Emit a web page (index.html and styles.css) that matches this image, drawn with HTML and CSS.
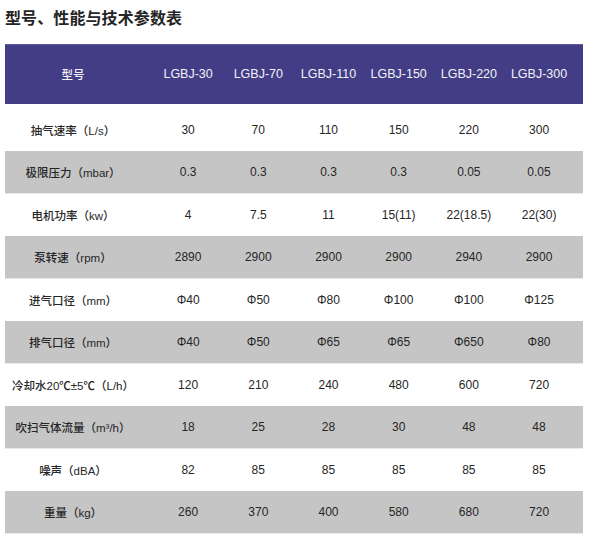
FILE: index.html
```html
<!DOCTYPE html>
<html lang="zh">
<head>
<meta charset="utf-8">
<title>型号、性能与技术参数表</title>
<link rel="stylesheet" href="styles.css">
</head>
<body>
<h1 class="title">型号、性能与技术参数表</h1>
<table class="spec">
  <colgroup>
    <col class="c-label">
    <col class="c-val"><col class="c-val"><col class="c-val">
    <col class="c-val"><col class="c-val"><col class="c-val">
    <col class="c-pad">
  </colgroup>
  <thead>
    <tr class="head">
      <th class="label">型号</th>
      <th>LGBJ-30</th><th>LGBJ-70</th><th>LGBJ-110</th><th>LGBJ-150</th><th>LGBJ-220</th><th>LGBJ-300</th><th></th>
    </tr>
  </thead>
  <tbody>
    <tr class="first"><td class="label">抽气速率（L/s）</td><td>30</td><td>70</td><td>110</td><td>150</td><td>220</td><td>300</td><td></td></tr>
    <tr class="alt"><td class="label">极限压力（mbar）</td><td>0.3</td><td>0.3</td><td>0.3</td><td>0.3</td><td>0.05</td><td>0.05</td><td></td></tr>
    <tr><td class="label">电机功率（kw）</td><td>4</td><td>7.5</td><td>11</td><td>15(11)</td><td>22(18.5)</td><td>22(30)</td><td></td></tr>
    <tr class="alt"><td class="label">泵转速（rpm）</td><td>2890</td><td>2900</td><td>2900</td><td>2900</td><td>2940</td><td>2900</td><td></td></tr>
    <tr><td class="label">进气口径（mm）</td><td>Φ40</td><td>Φ50</td><td>Φ80</td><td>Φ100</td><td>Φ100</td><td>Φ125</td><td></td></tr>
    <tr class="alt"><td class="label">排气口径（mm）</td><td>Φ40</td><td>Φ50</td><td>Φ65</td><td>Φ65</td><td>Φ650</td><td>Φ80</td><td></td></tr>
    <tr><td class="label">冷却水20℃±5℃（L/h）</td><td>120</td><td>210</td><td>240</td><td>480</td><td>600</td><td>720</td><td></td></tr>
    <tr class="alt"><td class="label">吹扫气体流量（m³/h）</td><td>18</td><td>25</td><td>28</td><td>30</td><td>48</td><td>48</td><td></td></tr>
    <tr><td class="label">噪声（dBA）</td><td>82</td><td>85</td><td>85</td><td>85</td><td>85</td><td>85</td><td></td></tr>
    <tr class="alt"><td class="label">重量（kg）</td><td>260</td><td>370</td><td>400</td><td>580</td><td>680</td><td>720</td><td></td></tr>
  </tbody>
</table>
</body>
</html>
```
FILE: styles.css
```css
html, body {
  margin: 0;
  padding: 0;
  background: #ffffff;
}
body {
  font-family: "Liberation Sans", Arial, "Noto Sans CJK SC", sans-serif;
  color: #262626;
}
.title {
  margin: 0;
  padding: 6px 0 0 5px;
  height: 44px;
  box-sizing: border-box;
  font-family: "Noto Sans CJK SC", sans-serif;
  font-size: 16px;
  line-height: 22px;
  font-weight: 700;
  color: #262626;
  letter-spacing: 0.1px;
}
.spec {
  margin-left: 5px;
  width: 578px;
  border-collapse: collapse;
  border-spacing: 0;
  table-layout: fixed;
}
.c-label { width: 148px; }
.c-val { width: 70.2px; }
.c-pad { width: 8.8px; }
.spec th, .spec td {
  padding: 0;
  text-align: center;
  font-size: 12px;
  font-weight: 400;
  white-space: nowrap;
}
.spec .label {
  padding-right: 12px;
  font-family: "Liberation Sans", Arial, "Noto Sans CJK SC", sans-serif;
  font-size: 11.5px;
  font-weight: 500;
}
.head {
  background: #433d86;
  color: #f2f2f7;
  height: 59px;
}
.head th { border-top: 1px solid #5f5aa0; font-size: 12.5px; }
.head .label { font-size: 11.5px; }
tbody tr { height: 42.56px; }
tbody tr.first { height: 47px; }
tbody tr.first td { padding-top: 5px; }
tbody tr.alt { background: #c5c5c5; }
tbody tr.alt td { border-bottom: 1px solid #e8e8e8; }
```
